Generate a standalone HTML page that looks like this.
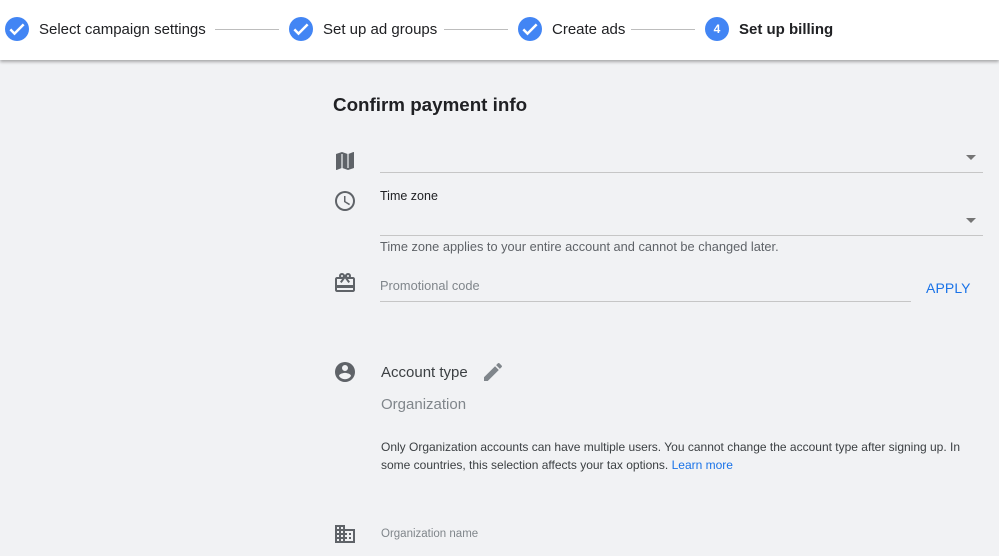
<!DOCTYPE html>
<html><head><style>
body{margin:0;width:999px;height:556px;background:#f1f2f4;font-family:"Liberation Sans",Arial,sans-serif;overflow:hidden;position:relative;color:#202124}
.hdr{position:absolute;left:0;top:0;width:999px;height:60px;background:#fff;box-shadow:0 2px 3px rgba(0,0,0,.3)}
.s{position:absolute;top:17px;height:24px;display:flex;align-items:center;font-size:15px;color:#202124}
.c{width:24px;height:24px;border-radius:50%;background:#4285f4;margin-right:10px;display:flex;align-items:center;justify-content:center;color:#fff;font-size:12px;font-weight:bold}
.ln{position:absolute;top:29px;height:1px;background:#bdbdbd}
.a{position:absolute}
.ul{position:absolute;height:1px;background:#c6c6c6}
.t{position:absolute;font-size:13px;color:#5f6368}
.ic{position:absolute;fill:#5f6368}
</style></head><body>
<div class="hdr">
<div class="s" style="left:5px"><div class="c"><svg width="20" height="20" viewBox="0 0 24 24"><path d="M4 12.5l5 5L20 6.5" fill="none" stroke="#fff" stroke-width="3"/></svg></div>Select campaign settings</div>
<div class="ln" style="left:215px;width:64px"></div>
<div class="s" style="left:289px"><div class="c"><svg width="20" height="20" viewBox="0 0 24 24"><path d="M4 12.5l5 5L20 6.5" fill="none" stroke="#fff" stroke-width="3"/></svg></div>Set up ad groups</div>
<div class="ln" style="left:444px;width:64px"></div>
<div class="s" style="left:518px"><div class="c"><svg width="20" height="20" viewBox="0 0 24 24"><path d="M4 12.5l5 5L20 6.5" fill="none" stroke="#fff" stroke-width="3"/></svg></div>Create ads</div>
<div class="ln" style="left:631px;width:64px"></div>
<div class="s" style="left:705px;font-weight:bold"><div class="c">4</div>Set up billing</div>
</div>
<div class="a" style="left:333px;top:94px;font-size:18.8px;font-weight:bold;color:#202124">Confirm payment info</div>
<svg class="ic" style="left:333px;top:149px" width="24" height="24" viewBox="0 0 24 24"><path d="M20.5 3l-.16.03L15 5.1 9 3 3.36 4.9c-.21.07-.36.25-.36.48V20.5c0 .28.22.5.5.5l.16-.03L9 18.9l6 2.1 5.64-1.9c.21-.07.36-.25.36-.48V3.5c0-.28-.22-.5-.5-.5z"/><path d="M9 5v14M15 5v14" stroke="#f1f2f4" stroke-width="1.2"/></svg>
<div class="a" style="left:966px;top:155px;width:0;height:0;border-left:5px solid transparent;border-right:5px solid transparent;border-top:5px solid #757575"></div>
<div class="ul" style="left:380px;top:172px;width:603px"></div>
<svg class="ic" style="left:333px;top:189px" width="24" height="24" viewBox="0 0 24 24"><path d="M12 2a10 10 0 100 20 10 10 0 000-20zm0 18a8 8 0 110-16 8 8 0 010 16zm.5-13H11v6l5.2 3.2.8-1.3-4.5-2.7z"/></svg>
<div class="t" style="left:380px;top:189px;color:#202124;font-size:12.5px">Time zone</div>
<div class="a" style="left:966px;top:218px;width:0;height:0;border-left:5px solid transparent;border-right:5px solid transparent;border-top:5px solid #757575"></div>
<div class="ul" style="left:380px;top:235px;width:603px"></div>
<div class="t" style="left:380px;top:239px;font-size:12.8px">Time zone applies to your entire account and cannot be changed later.</div>
<svg class="ic" style="left:333px;top:271px" width="24" height="24" viewBox="0 0 24 24"><path d="M20 6h-2.2c.1-.3.2-.6.2-1a3 3 0 00-5.5-1.6L12 4l-.5-.6A3 3 0 006 5c0 .4.1.7.2 1H4c-1.1 0-2 .9-2 2v11c0 1.1.9 2 2 2h16c1.1 0 2-.9 2-2V8c0-1.1-.9-2-2-2zm-5-2a1 1 0 110 2 1 1 0 010-2zM9 4a1 1 0 110 2 1 1 0 010-2zm11 15H4v-2h16v2zm0-5H4V8h5.1L7 10.8 8.6 12 12 7.4l3.4 4.6 1.6-1.2L14.9 8H20v6z"/></svg>
<div class="t" style="left:380px;top:278px;color:#80868b;font-size:12.8px">Promotional code</div>
<div class="ul" style="left:380px;top:301px;width:531px"></div>
<div class="a" style="left:926px;top:280px;font-size:14px;color:#1a73e8;letter-spacing:.1px">APPLY</div>
<svg class="ic" style="left:333px;top:360px" width="24" height="24" viewBox="0 0 24 24"><path d="M12 2a10 10 0 100 20 10 10 0 000-20zm0 3a3 3 0 110 6 3 3 0 010-6zm0 14.2a7.2 7.2 0 01-6-3.2c0-2 4-3.1 6-3.1s6 1.1 6 3.1a7.2 7.2 0 01-6 3.2z"/></svg>
<div class="a" style="left:381px;top:364px;font-size:15px;color:#3c4043">Account type</div>
<svg class="ic" style="left:481px;top:360px;fill:#80868b" width="24" height="24" viewBox="0 0 24 24"><path d="M3 17.25V21h3.75L17.8 9.94l-3.75-3.75L3 17.25zM20.7 7.04a1 1 0 000-1.41l-2.34-2.34a1 1 0 00-1.41 0l-1.83 1.83 3.75 3.75 1.83-1.83z"/></svg>
<div class="a" style="left:381px;top:396px;font-size:15px;color:#80868b">Organization</div>
<div class="t" style="left:381px;top:438px;width:600px;font-size:12px;line-height:18px;color:#3c4043">Only Organization accounts can have multiple users. You cannot change the account type after signing up. In some countries, this selection affects your tax options. <span style="color:#1a73e8">Learn more</span></div>
<svg class="ic" style="left:333px;top:522px" width="24" height="24" viewBox="0 0 24 24"><path d="M12 7V3H2v18h20V7H12zM6 19H4v-2h2v2zm0-4H4v-2h2v2zm0-4H4V9h2v2zm0-4H4V5h2v2zm4 12H8v-2h2v2zm0-4H8v-2h2v2zm0-4H8V9h2v2zm0-4H8V5h2v2zm10 12h-8v-2h2v-2h-2v-2h2v-2h-2V9h8v10zm-2-8h-2v2h2v-2zm0 4h-2v2h2v-2z"/></svg>
<div class="t" style="left:381px;top:528px;font-size:11.5px;color:#80868b">Organization name</div>
</body></html>
